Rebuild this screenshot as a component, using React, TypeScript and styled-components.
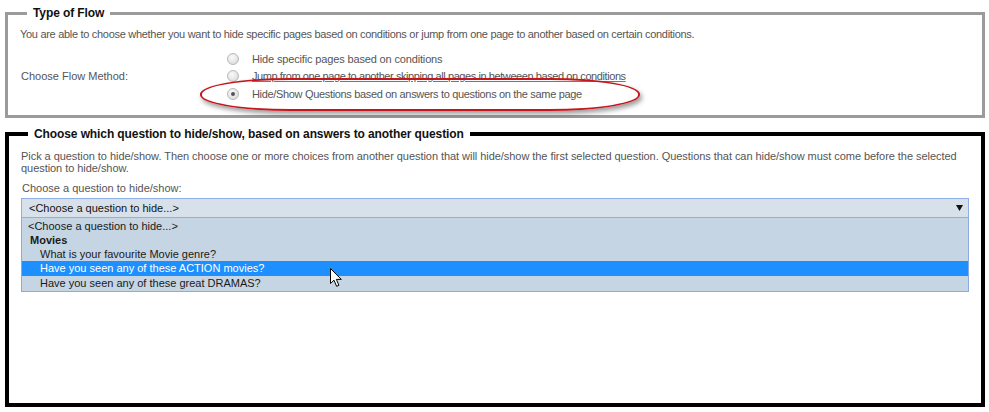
import React from 'react';
import styled, { createGlobalStyle } from 'styled-components';

const GlobalStyle = createGlobalStyle`
  html, body {
    margin: 0;
    padding: 0;
    background: #ffffff;
  }
  body {
    font-family: 'Liberation Sans', Arial, sans-serif;
    font-size: 11px;
    color: #555555;
  }
`;

const Page = styled.div`
  width: 989px;
  height: 412px;
  box-sizing: border-box;
  padding: 6px 4px 0 5px;
  overflow: hidden;
`;

const Fieldset = styled.fieldset<{ $border: string; $width: number }>`
  margin: 0;
  min-width: 0;
  border: ${({ $width }) => $width}px solid ${({ $border }) => $border};
  padding: 0 12px;
  & + & {
    margin-top: 9px;
  }
`;

const Legend = styled.legend`
  margin-left: 7px;
  padding: 0 6px;
  font-size: 12px;
  line-height: 15px;
  font-weight: bold;
  letter-spacing: -0.1px;
  color: #111111;
`;

const Description = styled.p`
  margin: 7px 0 0 0;
  line-height: 13px;
  letter-spacing: -0.3px;
`;

const FlowRow = styled.div`
  display: flex;
  align-items: center;
  margin-top: 9px;
  padding-bottom: 12px;
`;

const FlowLabel = styled.div`
  width: 207px;
  padding-left: 1px;
  box-sizing: border-box;
`;

const RadioGroup = styled.div`
  position: relative;
  display: flex;
  flex-direction: column;
`;

const RadioRow = styled.div<{ $underline?: boolean; $spacing: number }>`
  display: flex;
  align-items: center;
  height: 17.5px;
  gap: 13px;
  letter-spacing: ${({ $spacing }) => $spacing}px;
  text-decoration: ${({ $underline }) => ($underline ? 'underline' : 'none')};
  text-decoration-color: #777777;
`;

const Radio = styled.span<{ $checked?: boolean }>`
  position: relative;
  width: 12px;
  height: 12px;
  border-radius: 50%;
  box-sizing: border-box;
  border: 1px solid #b9b9b9;
  background: radial-gradient(circle at 40% 35%, #fafafa 0%, #e6e6e6 55%, #d2d2d2 100%);
  flex: none;

  &::after {
    content: '';
    display: ${({ $checked }) => ($checked ? 'block' : 'none')};
    position: absolute;
    left: 3px;
    top: 3px;
    width: 4px;
    height: 4px;
    border-radius: 50%;
    background: #555555;
  }
`;

const Highlight = styled.div`
  position: absolute;
  left: -27px;
  top: 28px;
  width: 436px;
  height: 29px;
  border: 2px solid #c4161c;
  border-radius: 90px / 16px;
  box-shadow: 2px 3px 5px rgba(0, 0, 0, 0.4);
  pointer-events: none;
`;

const Intro = styled.p`
  margin: 8px 0 0 0;
  line-height: 12.5px;
  letter-spacing: -0.05px;
`;

const FieldLabel = styled.div`
  margin-top: 7px;
  padding-left: 1px;
  line-height: 13px;
`;

const SelectWrap = styled.div`
  position: relative;
  margin-top: 3px;
  padding-bottom: 111px;
`;

const SelectBox = styled.div`
  display: flex;
  align-items: center;
  justify-content: space-between;
  height: 20px;
  box-sizing: border-box;
  padding: 0 5px 0 7px;
  border: 1px solid #8eb0e6;
  background: #d8e1ea;
  color: #111111;
`;

const Arrow = styled.svg`
  display: block;
`;

const OptionList = styled.div`
  border: 1px solid #8aaae0;
  border-top: none;
  background: #c6d5e3;
  padding: 1px 0 1px 0;
`;

const Option = styled.div<{ $indent: number; $selected?: boolean; $group?: boolean }>`
  height: 14.3px;
  line-height: 14.3px;
  padding-left: ${({ $indent }) => $indent}px;
  color: ${({ $selected }) => ($selected ? '#ffffff' : '#1a1a1a')};
  background: ${({ $selected }) => ($selected ? '#1e8fff' : 'transparent')};
  font-weight: ${({ $group }) => ($group ? 'bold' : 'normal')};
`;

const Cursor = styled.svg`
  position: absolute;
  left: 309px;
  top: 70px;
`;

const flowOptions = [
  { label: 'Hide specific pages based on conditions', spacing: -0.15 },
  {
    label: 'Jump from one page to another skipping all pages in betweeen based on conditions',
    underline: true,
    spacing: -0.42,
  },
  {
    label: 'Hide/Show Questions based on answers to questions on the same page',
    checked: true,
    spacing: -0.33,
  },
];

const questionOptions = [
  { label: '<Choose a question to hide...>', indent: 6 },
  { label: 'Movies', indent: 8, group: true },
  { label: 'What is your favourite Movie genre?', indent: 18 },
  { label: 'Have you seen any of these ACTION movies?', indent: 18, selected: true },
  { label: 'Have you seen any of these great DRAMAS?', indent: 18 },
];

export default function App() {
  return (
    <>
      <GlobalStyle />
      <Page>
        <Fieldset $border="#9b9b9b" $width={3}>
          <Legend>Type of Flow</Legend>
          <Description>
            You are able to choose whether you want to hide specific pages based on conditions or jump from one page to
            another based on certain conditions.
          </Description>
          <FlowRow>
            <FlowLabel>Choose Flow Method:</FlowLabel>
            <RadioGroup>
              {flowOptions.map((o) => (
                <RadioRow key={o.label} $underline={o.underline} $spacing={o.spacing}>
                  <Radio $checked={o.checked} />
                  <span>{o.label}</span>
                </RadioRow>
              ))}
              <Highlight />
            </RadioGroup>
          </FlowRow>
        </Fieldset>

        <Fieldset $border="#000000" $width={4}>
          <Legend>Choose which question to hide/show, based on answers to another question</Legend>
          <Intro>
            Pick a question to hide/show. Then choose one or more choices from another question that will hide/show the
            first selected question. Questions that can hide/show must come before the selected question to hide/show.
          </Intro>
          <FieldLabel>Choose a question to hide/show:</FieldLabel>
          <SelectWrap>
            <SelectBox>
              <span>{'<Choose a question to hide...>'}</span>
              <Arrow width="7" height="6" viewBox="0 0 7 6">
                <path d="M0 0 H7 L3.5 6 Z" fill="#111111" />
              </Arrow>
            </SelectBox>
            <OptionList>
              {questionOptions.map((q) => (
                <Option key={q.label} $indent={q.indent} $selected={q.selected} $group={q.group}>
                  {q.label}
                </Option>
              ))}
            </OptionList>
            <Cursor width="13" height="20" viewBox="0 0 13 20">
              <path
                d="M0.5 0.5 L0.5 15.5 L4 12.2 L6.6 18.3 L8.9 17.3 L6.4 11.4 L11.3 11.4 Z"
                fill="#ffffff"
                stroke="#000000"
                strokeWidth="1"
                strokeLinejoin="miter"
              />
            </Cursor>
          </SelectWrap>
        </Fieldset>
      </Page>
    </>
  );
}
